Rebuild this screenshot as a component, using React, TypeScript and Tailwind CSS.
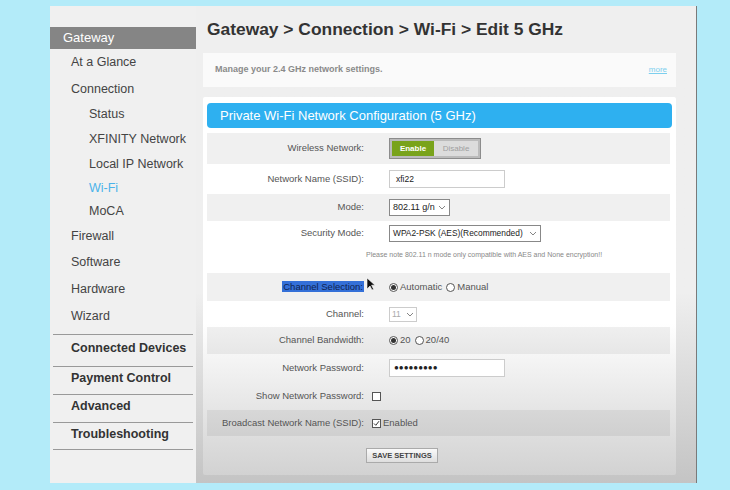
import React from 'react';

const font = { fontFamily: '"Liberation Sans", Arial, sans-serif' };

const Chevron = () => (
  <svg width="8" height="5" viewBox="0 0 8 5" className="ml-auto shrink-0">
    <path d="M1 1l3 3 3-3" fill="none" stroke="#777" strokeWidth="0.9" />
  </svg>
);

const Radio = ({ checked, label }: { checked?: boolean; label: string }) => (
  <span className="flex items-center gap-[2px] mr-[4px]">
    <span className="w-[9px] h-[9px] rounded-full border border-[#555] bg-white flex items-center justify-center">
      {checked && <span className="w-[5px] h-[5px] rounded-full bg-[#333]" />}
    </span>
    <span className="text-[9.5px] text-[#555]">{label}</span>
  </span>
);

const Row = ({
  label,
  h,
  shaded,
  children,
  highlight,
}: {
  label: string;
  h: string;
  shaded?: boolean;
  children?: React.ReactNode;
  highlight?: boolean;
}) => (
  <div className={`flex items-center ${h} ${shaded ? 'bg-black/[0.06]' : ''}`}>
    <div className="relative w-[157px] text-right text-[9.5px] text-[#555] shrink-0">
      {highlight ? (
        <span className="bg-[#3470d8] text-[#0f2350] px-[1px]">{label}</span>
      ) : (
        label
      )}
      {highlight && (
        <svg width="9" height="14" viewBox="0 0 9 14" className="absolute right-[-11px] top-[-3px]">
          <path d="M1 1v11l3-3 2 4 1.6-.8-2-4H9z" fill="#111" stroke="#fff" strokeWidth="0.6" />
        </svg>
      )}
    </div>
    <div className="ml-[25px] flex items-center">{children}</div>
  </div>
);

const sideItems = [
  { label: 'At a Glance', h: 'h-[27px]', sub: false },
  { label: 'Connection', h: 'h-[26px]', sub: false },
  { label: 'Status', h: 'h-[25px]', sub: true },
  { label: 'XFINITY Network', h: 'h-[24px]', sub: true },
  { label: 'Local IP Network', h: 'h-[26px]', sub: true },
  { label: 'Wi-Fi', h: 'h-[23px]', sub: true, active: true },
  { label: 'MoCA', h: 'h-[23px]', sub: true },
  { label: 'Firewall', h: 'h-[26px]', sub: false },
  { label: 'Software', h: 'h-[27px]', sub: false },
  { label: 'Hardware', h: 'h-[27px]', sub: false },
  { label: 'Wizard', h: 'h-[26px]', sub: false },
];

const sections = [
  { label: 'Connected Devices', h: 'h-[31px]' },
  { label: 'Payment Control', h: 'h-[27px]' },
  { label: 'Advanced', h: 'h-[27px]' },
  { label: 'Troubleshooting', h: 'h-[26px]' },
];

export default function App() {
  return (
    <div className="w-[730px] h-[490px] bg-[#b3ebf9] pt-[6px] pl-[50px] overflow-hidden" style={font}>
      <div className="w-[647px] h-[477px] flex border-r border-[#7a7a7a] bg-[#f0f0f0]">
        {/* Sidebar */}
        <div className="w-[146px] shrink-0 pt-[21px]">
          <div className="h-[22px] bg-[#858585] text-white text-[13px] pl-[13px] flex items-center">
            Gateway
          </div>
          {sideItems.map((item) => (
            <div
              key={item.label}
              className={`${item.h} flex items-center text-[12.5px] ${item.sub ? 'pl-[39px]' : 'pl-[21px]'} ${
                item.active ? 'text-[#4bb3ea]' : 'text-[#444]'
              }`}
            >
              {item.label}
            </div>
          ))}
          <div className="mt-[5px] mx-[3px] border-t border-[#999]" />
          {sections.map((s) => (
            <div key={s.label}>
              <div className={`${s.h} flex items-center pb-[4px] pl-[21px] text-[12.5px] font-bold text-[#333]`}>
                {s.label}
              </div>
              <div className="mx-[3px] border-t border-[#999]" />
            </div>
          ))}
        </div>

        {/* Main */}
        <div className="flex-1 bg-linear-to-b from-[#efefef] from-60% to-[#c4c4c4] pl-[7px] pt-[13px]">
          <div className="h-[20px] pl-[4px] text-[17.4px] font-bold text-[#333] leading-[20px] whitespace-nowrap">
            Gateway &gt; Connection &gt; Wi-Fi &gt; Edit 5 GHz
          </div>
          <div className="mt-[14px] w-[473px] h-[34px] bg-[#fafafa] pl-[12px] pr-[9px] flex items-center justify-between">
            <span className="text-[9px] font-bold text-[#8a8a8a]">Manage your 2.4 GHz network settings.</span>
            <span className="text-[8px] text-[#7ccfee] underline">more</span>
          </div>

          <div className="mt-[10px] w-[473px] h-[378px] rounded-[2px] bg-linear-to-b from-white from-60% to-[#d2d2d2] pl-[4px] pr-[4px] pt-[6px]">
            <div className="h-[25px] rounded-[4px] bg-[#2eb0f0] text-white text-[13px] pl-[13px] flex items-center">
              Private Wi-Fi Network Configuration (5 GHz)
            </div>
            <div className="mt-[5px] mr-[2px]">
              <Row label="Wireless Network:" h="h-[31px]" shaded>
                <div className="flex border border-[#8c8c8c] bg-[#bbb] p-[2px]">
                  <span className="w-[42px] h-[15px] bg-[#79a31b] text-white text-[8px] font-bold flex items-center justify-center">
                    Enable
                  </span>
                  <span className="w-[44px] h-[15px] bg-[#dcdcdc] text-[#a0a0a0] text-[8px] flex items-center justify-center">
                    Disable
                  </span>
                </div>
              </Row>
              <Row label="Network Name (SSID):" h="h-[30px]">
                <div className="w-[116px] h-[18px] border border-[#ccc] bg-white text-[8.5px] text-[#222] pl-[6px] flex items-center">
                  xfi22
                </div>
              </Row>
              <Row label="Mode:" h="h-[27px]" shaded>
                <div className="w-[61px] h-[17px] border border-[#888] bg-white text-[9px] text-[#222] px-[3px] flex items-center whitespace-nowrap">
                  802.11 g/n
                  <Chevron />
                </div>
              </Row>
              <Row label="Security Mode:" h="h-[24px]">
                <div className="w-[152px] h-[17px] border border-[#888] bg-white text-[8.4px] text-[#222] px-[3px] flex items-center whitespace-nowrap">
                  WPA2-PSK (AES)(Recommended)
                  <Chevron />
                </div>
              </Row>
              <div className="h-[20px] pl-[159px] flex items-center text-[7px] text-[#888] whitespace-nowrap">
                Please note 802.11 n mode only compatible with AES and None encryption!!
              </div>
              <div className="h-[8px]" />
              <Row label="Channel Selection:" h="h-[28px]" shaded highlight>
                <Radio checked label="Automatic" />
                <Radio label="Manual" />
              </Row>
              <Row label="Channel:" h="h-[26px]">
                <div className="w-[28px] h-[15px] border border-[#ccc] bg-white text-[8.5px] text-[#aaa] px-[2px] flex items-center">
                  11
                  <Chevron />
                </div>
              </Row>
              <Row label="Channel Bandwidth:" h="h-[27px]" shaded>
                <Radio checked label="20" />
                <Radio label="20/40" />
              </Row>
              <Row label="Network Password:" h="h-[28px]">
                <div className="w-[116px] h-[18px] border border-[#ccc] bg-white text-[8px] text-[#222] pl-[4px] flex items-center">
                  ●●●●●●●●●
                </div>
              </Row>
              <Row label="Show Network Password:" h="h-[28px]">
                <span className="-ml-[17px] w-[9px] h-[9px] border border-[#555] bg-white" />
              </Row>
              <Row label="Broadcast Network Name (SSID):" h="h-[26px]" shaded>
                <span className="-ml-[17px] flex items-center gap-[2px]">
                  <span className="w-[9px] h-[9px] border border-[#555] bg-white flex items-center justify-center">
                    <svg width="7" height="7" viewBox="0 0 7 7">
                      <path d="M1 3.5l1.8 1.8L6 1.2" fill="none" stroke="#333" strokeWidth="1" />
                    </svg>
                  </span>
                  <span className="text-[9.5px] text-[#555]">Enabled</span>
                </span>
              </Row>
              <div className="mt-[12px] pl-[159px]">
                <div className="w-[72px] h-[15px] border border-[#aaa] bg-linear-to-b from-[#fafafa] to-[#dedede] flex items-center justify-center text-[7.5px] font-bold text-[#444]">
                  SAVE SETTINGS
                </div>
              </div>
            </div>
          </div>
        </div>
      </div>
    </div>
  );
}
